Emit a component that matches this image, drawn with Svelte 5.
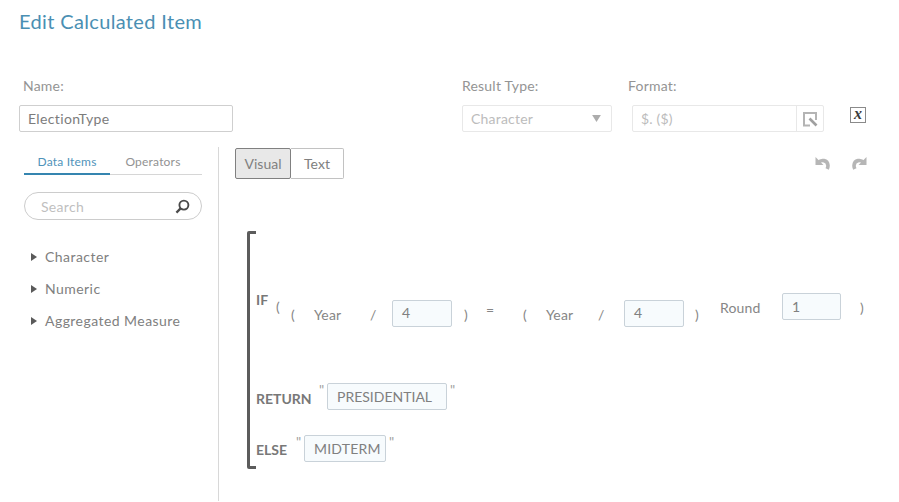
<script>
  const tree = ['Character', 'Numeric', 'Aggregated Measure'];
</script>

<div class="page">
  <h1>Edit Calculated Item</h1>

  <div class="fields">
    <div class="field name">
      <span class="label">Name:</span>
      <div class="box">ElectionType</div>
    </div>
    <div class="field type">
      <span class="label">Result Type:</span>
      <div class="box off">Character<svg class="caret" viewBox="0 0 10 8" width="9" height="7"><path d="M0 0h10L5 8z" /></svg></div>
    </div>
    <div class="field format">
      <span class="label">Format:</span>
      <div class="box off fmt">
        <span class="fmt-text">$. ($)</span>
        <span class="picker">
          <svg viewBox="0 0 18 18" width="18" height="18" fill="none" stroke="#b4b4b4" stroke-width="2">
            <path d="M9 15.500H3V3h12v7" />
            <path d="M8.500 8.500l7 7" stroke="#a0a0a0" stroke-width="2.600" />
          </svg>
        </span>
      </div>
    </div>
    <span class="fx">x</span>
  </div>

  <div class="body">
    <aside>
      <div class="tabs">
        <span class="tab active">Data Items</span>
        <span class="tab">Operators</span>
      </div>
      <div class="search">
        <span>Search</span>
        <svg viewBox="0 0 16 16" width="15" height="15" fill="none" stroke="#4a4a4a" stroke-width="2">
          <circle cx="9.500" cy="6.500" r="4.800" />
          <path d="M6 10l-4.500 4.500" stroke-width="2.400" />
        </svg>
      </div>
      <ul>
        {#each tree as item}
          <li><svg viewBox="0 0 6 8" width="6" height="8"><path d="M0 0l6 4-6 4z" /></svg>{item}</li>
        {/each}
      </ul>
    </aside>

    <main>
      <div class="toolbar">
        <div class="toggle">
          <span class="seg on">Visual</span>
          <span class="seg">Text</span>
        </div>
        <div class="history">
          <svg viewBox="0 0 16 16" width="16" height="16"><path d="M0.500 2v8h8z" class="head" /><path d="M3.500 7.500C6 4.500 12.500 4.500 13 10.500c.1 1-.2 2-.8 3.500" class="tail" /></svg>
          <svg class="flip" viewBox="0 0 16 16" width="16" height="16"><path d="M0.500 2v8h8z" class="head" /><path d="M3.500 7.500C6 4.500 12.500 4.500 13 10.500c.1 1-.2 2-.8 3.500" class="tail" /></svg>
        </div>
      </div>

      <div class="expr">
        <div class="row if">
          <b class="kw">IF</b>
          <span class="t open">(</span>
          <div class="group">
            <span class="t p1">(</span>
            <span class="t year">Year</span>
            <span class="t slash">/</span>
            <span class="val v4">4</span>
            <span class="t p2">)</span>
          </div>
          <span class="t eq">=</span>
          <div class="group later">
            <span class="t p1">(</span>
            <span class="t year">Year</span>
            <span class="t slash">/</span>
            <span class="val v4">4</span>
            <span class="t p2">)</span>
          </div>
          <span class="t round">Round</span>
          <span class="val one">1</span>
          <span class="t close">)</span>
        </div>
        <div class="row ret">
          <b class="kw">RETURN</b>
          <span class="q">"</span>
          <span class="val pres">PRESIDENTIAL</span>
          <span class="q">"</span>
        </div>
        <div class="row els">
          <b class="kw">ELSE</b>
          <span class="q">"</span>
          <span class="val mid">MIDTERM</span>
          <span class="q">"</span>
        </div>
      </div>
    </main>
  </div>
</div>

<style>
  :global(body) { background: #fff; }
  .page {
    width: 899px;
    height: 502px;
    overflow: hidden;
    font-family: Lato, "Open Sans", sans-serif;
    font-size: 14px;
    color: #808080;
    box-sizing: border-box;
  }
  h1 {
    margin: 0;
    padding: 9px 0 0 19px;
    font-size: 20px;
    line-height: 24px;
    font-weight: 400;
    color: #4a8fb3;
    letter-spacing: 0.35px;
  }
  .fields {
    display: flex;
    align-items: flex-end;
    margin-top: 44px;
    padding-left: 19px;
  }
  .field { display: flex; flex-direction: column; }
  .label { line-height: 17px; margin-bottom: 11px; color: #949494; letter-spacing: 0.2px; }
  .name .label { margin-left: 4px; }
  .name { width: 214px; }
  .type { width: 150px; margin-left: 229px; }
  .format { width: 192px; margin-left: 20px; }
  .format .label { margin-left: -4px; }
  .box {
    height: 27px;
    box-sizing: border-box;
    border: 1px solid #cfcfcf;
    border-radius: 2px;
    padding-left: 8px;
    line-height: 25px;
    color: #7c7c7c;
    letter-spacing: 0.35px;
    display: flex;
    align-items: center;
    justify-content: space-between;
  }
  .box.off { border-color: #e8e8e8; color: #bcbcbc; letter-spacing: 0.2px; }
  .caret { fill: #acacac; margin-right: 10px; }
  .fmt { padding-right: 0; }
  .picker {
    width: 26px;
    height: 25px;
    border-left: 1px solid #e8e8e8;
    display: flex;
    align-items: center;
    justify-content: center;
  }
  .fx {
    width: 16px;
    height: 16px;
    box-sizing: border-box;
    margin: 0 0 9px 26px;
    border: 1px solid #8a8a8a;
    font-family: "Liberation Serif", serif;
    font-size: 16px;
    line-height: 12px;
    font-weight: 700;
    font-style: italic;
    text-align: center;
    color: #3c3c3c;
  }

  .body { display: flex; margin-top: 15px; height: 354px; }
  aside {
    flex: none;
    width: 194px;
    padding-left: 24px;
    border-right: 1px solid #d8d8d8;
  }
  .tabs {
    display: flex;
    width: 178px;
    height: 27px;
    margin-top: 1px;
    box-sizing: border-box;
    border-bottom: 1px solid #d6d6d6;
  }
  .tab {
    width: 86px;
    height: 27px;
    box-sizing: border-box;
    text-align: center;
    font-size: 12px;
    line-height: 27px;
    color: #929292;
    letter-spacing: 0.2px;
  }
  .tab.active { color: #4f93ba; border-bottom: 2px solid #3585b0; }
  .search {
    width: 178px;
    height: 28px;
    margin-top: 17px;
    box-sizing: border-box;
    border: 1px solid #cccccc;
    border-radius: 14px;
    padding: 0 11px 0 16px;
    display: flex;
    align-items: center;
    justify-content: space-between;
    color: #bfbfbf;
    letter-spacing: 0.3px;
  }
  ul { list-style: none; margin: 21px 0 0; padding: 0 0 0 7px; }
  li {
    height: 32px;
    line-height: 32px;
    display: flex;
    align-items: center;
    gap: 8px;
    letter-spacing: 0.45px;
  }
  li svg { fill: #5a5a5a; flex: none; }

  main { flex: 1; padding-left: 16px; min-width: 0; }
  .toolbar { display: flex; justify-content: space-between; align-items: flex-start; padding-top: 1px; }
  .toggle { display: flex; }
  .seg {
    height: 31px;
    width: 53px;
    box-sizing: border-box;
    line-height: 30px;
    border: 1px solid #c2c2c2;
    border-left: 0;
    border-radius: 0 2px 2px 0;
    text-align: center;
  }
  .seg.on {
    width: 56px;
    background: #e8e8e8;
    border: 1px solid #808080;
    border-radius: 2px;
  }
  .history { display: flex; gap: 20px; margin: 7px 32px 0 0; }
  .history .head { fill: #b6b6b6; }
  .history .tail { fill: none; stroke: #b6b6b6; stroke-width: 3.600; }
  .flip { transform: scaleX(-1); }

  .expr {
    margin: 52px 0 0 12px;
    width: 620px;
    height: 238px;
    box-sizing: border-box;
    border-left: 3px solid #5c5c5c;
    border-radius: 2px 0 0 2px;
    padding-left: 6px;
    position: relative;
  }
  .expr::before, .expr::after {
    content: "";
    position: absolute;
    left: 0;
    width: 6px;
    height: 3px;
    background: #5c5c5c;
  }
  .expr::before { top: 0; }
  .expr::after { bottom: 0; }
  .row { display: flex; align-items: flex-start; }
  .kw { font-weight: 700; color: #787878; line-height: 18px; font-size: 14px; }
  .t { line-height: 18px; color: #868686; letter-spacing: 0.2px; }
  .val {
    display: block;
    box-sizing: border-box;
    height: 27px;
    border: 1px solid #c9d2d9;
    border-radius: 2px;
    background: #f7fbfd;
    color: #808080;
    line-height: 24px;
    padding-left: 9px;
    letter-spacing: 0.2px;
  }
  .if { padding-top: 62px; height: 88px; }
  .if .kw { margin-top: -2px; width: 20px; }
  .open { margin-top: 5px; }
  .group { display: flex; align-items: flex-start; margin-top: 7px; }
  .p1 { margin: 6px 0 0 11px; width: 4px; }
  .later .p1 { margin-left: 28px; }
  .year { margin: 6px 0 0 19px; width: 29px; }
  .slash { margin: 6px 0 0 27px; width: 5px; }
  .later .slash { margin-left: 23px; }
  .v4 { width: 60px; margin-left: 17px; }
  .later .v4 { margin-left: 21px; }
  .p2 { margin: 6px 0 0 12px; width: 4px; }
  .later .p2 { margin-left: 11px; }
  .eq { margin: 8px 0 0 18px; width: 9px; }
  .round { margin: 6px 0 0 21px; width: 43px; }
  .one { width: 59px; margin: 0 0 0 19px; line-height: 26px; }
  .close { margin: 6px 0 0 19px; }
  .ret { padding-top: 2px; }
  .els { margin-top: 25px; }
  .ret, .els { align-items: center; height: 27px; }
  .ret .kw { width: 55px; margin-top: 5px; }
  .els .kw { width: 32px; margin-top: 3px; }
  .q { align-self: flex-start; line-height: 14px; font-size: 14px; width: 5px; color: #a0a0a0; }
  .kw + .q { margin-left: 8px; }
  .pres { width: 120px; margin: 0 3px; letter-spacing: 0; line-height: 26px; }
  .mid { width: 82px; margin: 0 3px; line-height: 26px; }
</style>
